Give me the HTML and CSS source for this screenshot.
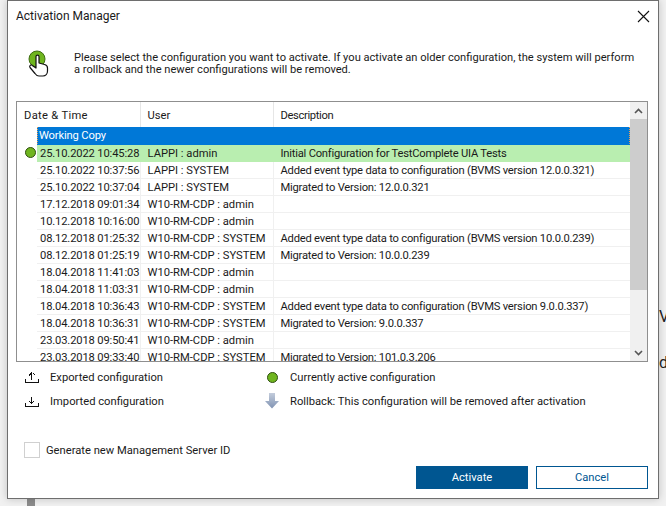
FILE: index.html
```html
<!DOCTYPE html>
<html lang="en">
<head>
  <meta charset="UTF-8" />
  <title>Activation Manager</title>
  <link rel="stylesheet" href="styles.css">
</head>
<body>
  <div class="desktop">
    <div class="behind-bar"></div>
    <span class="behind-text behind-v">V</span>
    <span class="behind-text behind-d">de</span>

    <div class="dialog">
      <div class="titlebar">
        <span class="title">Activation Manager</span>
        <svg class="close" width="13" height="13" viewBox="0 0 13 13">
          <path d="M1 1 L12 12 M12 1 L1 12" stroke="#111" stroke-width="1.1" fill="none"/>
        </svg>
      </div>

      <div class="intro">
        <svg class="intro-icon" width="24" height="30" viewBox="0 0 24 30">
          <circle cx="11" cy="11" r="8" fill="#6fb51f" stroke="#3f6d12" stroke-width="1"/>
          <path d="M10 8.5 C10 6.6 13 6.6 13 8.5 L13 15 L18.5 16.5 C20.5 17 21.5 18 21.5 20 L21.5 23 C21.5 26 19.5 28 17 28 L13 28 C11 28 10 27 9 25.5 L4 19.5 C3 18 4.8 16.2 6.3 17.4 L10 20 Z" fill="#fff" stroke="#111" stroke-width="1.2" stroke-linejoin="round"/>
        </svg>
        <p class="intro-text">Please select the configuration you want to activate. If you activate an older configuration, the system will perform<br>a rollback and the newer configurations will be removed.</p>
      </div>

      <div class="grid">
        <div class="grid-body">
          <table class="versions">
            <colgroup>
              <col class="col-mark"><col class="col-date"><col class="col-user"><col class="col-desc">
            </colgroup>
            <thead>
              <tr>
                <th colspan="2" class="head-date">Date &amp; Time</th>
                <th>User</th>
                <th>Description</th>
              </tr>
            </thead>
            <tbody>
              <tr class="selected"><td class="mark"></td><td class="focus-left">Working Copy</td><td></td><td class="focus-right"></td></tr>
              <tr class="active"><td class="mark"><span class="dot"></span></td><td>25.10.2022 10:45:28</td><td>LAPPI : admin</td><td>Initial Configuration for TestComplete UIA Tests</td></tr>
              <tr><td class="mark"></td><td>25.10.2022 10:37:56</td><td>LAPPI : SYSTEM</td><td>Added event type data to configuration (BVMS version 12.0.0.321)</td></tr>
              <tr><td class="mark"></td><td>25.10.2022 10:37:04</td><td>LAPPI : SYSTEM</td><td>Migrated to Version: 12.0.0.321</td></tr>
              <tr><td class="mark"></td><td>17.12.2018 09:01:34</td><td>W10-RM-CDP : admin</td><td></td></tr>
              <tr><td class="mark"></td><td>10.12.2018 10:16:00</td><td>W10-RM-CDP : admin</td><td></td></tr>
              <tr><td class="mark"></td><td>08.12.2018 01:25:32</td><td>W10-RM-CDP : SYSTEM</td><td>Added event type data to configuration (BVMS version 10.0.0.239)</td></tr>
              <tr><td class="mark"></td><td>08.12.2018 01:25:19</td><td>W10-RM-CDP : SYSTEM</td><td>Migrated to Version: 10.0.0.239</td></tr>
              <tr><td class="mark"></td><td>18.04.2018 11:41:03</td><td>W10-RM-CDP : admin</td><td></td></tr>
              <tr><td class="mark"></td><td>18.04.2018 11:03:31</td><td>W10-RM-CDP : admin</td><td></td></tr>
              <tr><td class="mark"></td><td>18.04.2018 10:36:43</td><td>W10-RM-CDP : SYSTEM</td><td>Added event type data to configuration (BVMS version 9.0.0.337)</td></tr>
              <tr><td class="mark"></td><td>18.04.2018 10:36:31</td><td>W10-RM-CDP : SYSTEM</td><td>Migrated to Version: 9.0.0.337</td></tr>
              <tr><td class="mark"></td><td>23.03.2018 09:50:41</td><td>W10-RM-CDP : admin</td><td></td></tr>
              <tr><td class="mark"></td><td>23.03.2018 09:33:40</td><td>W10-RM-CDP : SYSTEM</td><td>Migrated to Version: 101.0.3.206</td></tr>
            </tbody>
          </table>
        </div>
        <div class="scrollbar">
          <div class="scroll-btn">
            <svg width="9" height="6" viewBox="0 0 9 6"><path d="M1 5 L4.5 1.5 L8 5" stroke="#555" stroke-width="1.6" fill="none"/></svg>
          </div>
          <div class="scroll-track"><div class="scroll-thumb"></div></div>
          <div class="scroll-btn">
            <svg width="9" height="6" viewBox="0 0 9 6"><path d="M1 1 L4.5 4.5 L8 1" stroke="#555" stroke-width="1.6" fill="none"/></svg>
          </div>
        </div>
      </div>

      <div class="legend">
        <div class="legend-item">
          <span class="legend-icon">
            <svg width="14" height="12" viewBox="0 0 14 12" shape-rendering="crispEdges"><path d="M0.5 8 V11.5 H13.5 V8 M6.5 9 V1 M4.5 3.5 H5.5 M3.5 4.5 H4.5 M7.5 2.5 H8.5 M8.5 3.5 H9.5 M5 2.5 H6 M4 3.5 H5" stroke="#111" stroke-width="1" fill="none"/></svg>
          </span>
          Exported configuration
        </div>
        <div class="legend-item">
          <span class="legend-icon"><span class="dot"></span></span>
          Currently active configuration
        </div>
        <div class="legend-item">
          <span class="legend-icon">
            <svg width="14" height="12" viewBox="0 0 14 12" shape-rendering="crispEdges"><path d="M0.5 8 V11.5 H13.5 V8 M6.5 2 V9 M4 6.5 H5 M5 7.5 H6 M7 7.5 H8 M8 6.5 H9" stroke="#111" stroke-width="1" fill="none"/></svg>
          </span>
          Imported configuration
        </div>
        <div class="legend-item">
          <span class="legend-icon">
            <svg width="14" height="16" viewBox="0 0 14 16">
              <defs>
                <linearGradient id="rollback" x1="0" y1="0" x2="0" y2="1">
                  <stop offset="0" stop-color="#c3ccdb"/>
                  <stop offset="1" stop-color="#8093b3"/>
                </linearGradient>
              </defs>
              <path d="M4 0 H10 V8 H14 L7 15.5 L0 8 H4 Z" fill="url(#rollback)"/>
            </svg>
          </span>
          Rollback: This configuration will be removed after activation
        </div>
      </div>

      <label class="generate">
        <span class="checkbox"></span>
        Generate new Management Server ID
      </label>

      <div class="buttons">
        <button type="button" class="btn btn-primary">Activate</button>
        <button type="button" class="btn">Cancel</button>
      </div>
    </div>
  </div>
</body>
</html>
```

FILE: styles.css
```css
* {
  box-sizing: border-box;
}

html, body {
  margin: 0;
  padding: 0;
}

body {
  font-family: Roboto, "Liberation Sans", sans-serif;
  font-size: 11.2px;
  color: #1a1a1a;
}

.desktop {
  position: relative;
  width: 666px;
  height: 506px;
  overflow: hidden;
  background: #f1f1f1;
}

.behind-bar {
  position: absolute;
  left: 27px;
  top: 498px;
  width: 8px;
  height: 8px;
  background: #8c8c8c;
}

.behind-text {
  position: absolute;
  left: 659px;
  font-size: 16px;
  color: #222;
}

.behind-v {
  top: 307px;
}

.behind-d {
  top: 353px;
}

.dialog {
  position: absolute;
  left: 7px;
  top: 0;
  width: 652px;
  height: 499px;
  background: #fff;
  border: 1px solid #6e6e6e;
  box-shadow: 0 0 8px rgba(0,0,0,0.2);
  display: flex;
  flex-direction: column;
}

.titlebar {
  display: flex;
  justify-content: space-between;
  align-items: center;
  height: 30px;
  padding: 0 8px 0 8px;
}

.title {
  font-size: 12px;
}

.close {
  display: block;
}

.intro {
  display: flex;
  align-items: flex-start;
  height: 70px;
  padding: 17px 0 0 18px;
}

.intro-icon {
  flex: none;
  margin-right: 24px;
}

.intro-text {
  margin: 4px 0 0;
  font-size: 11.12px;
  line-height: 12px;
  white-space: nowrap;
}

.grid {
  display: flex;
  height: 261px;
  margin: 0 10px 0 8px;
  border: 1px solid #8f8f8f;
}

.grid-body {
  flex: 1;
  overflow: hidden;
}

.versions {
  width: 613px;
  table-layout: fixed;
  border-collapse: collapse;
}

.col-mark { width: 20px; }
.col-date { width: 103px; }
.col-user { width: 133px; }
.col-desc { width: 357px; }

.versions th {
  height: 25px;
  padding: 2px 0 0 7px;
  text-align: left;
  font-weight: normal;
  border-right: 1px solid #e6e6e6;
}

.versions th.head-date {
  padding-left: 7px;
  letter-spacing: 0.3px;
}

.versions th:last-child {
  letter-spacing: -0.35px;
}

.versions td {
  height: 17px;
  padding: 1px 0 0 7px;
  line-height: 15px;
  white-space: nowrap;
  overflow: hidden;
  border-right: 1px solid #f0f0f0;
  border-bottom: 1px solid #f0f0f0;
}

.versions td:nth-child(2) {
  padding-left: 3px;
  letter-spacing: -0.15px;
}

.versions td:last-child {
  letter-spacing: -0.22px;
}

.versions td.mark {
  padding: 0 0 0 8px;
  border-right: none;
  border-bottom: none;
}

.selected td:not(.mark) {
  background: #0078d7;
  color: #fff;
  border-color: #0078d7;
}

.versions .selected td.focus-left {
  padding-left: 2px;
  background: repeating-linear-gradient(#f0a050 0 1px, #0078d7 1px 2px) left / 1px 100% no-repeat, #0078d7;
}

.selected td.focus-right {
  background: repeating-linear-gradient(#f0a050 0 1px, #0078d7 1px 2px) right / 1px 100% no-repeat, #0078d7;
}

.active td:not(.mark) {
  background: #b9eeb0;
  border-color: #b9eeb0;
}

.dot {
  display: block;
  width: 11px;
  height: 11px;
  border-radius: 50%;
  background: #6fb51f;
  border: 1px solid #2f4f10;
}

.scrollbar {
  flex: none;
  width: 17px;
  display: flex;
  flex-direction: column;
  background: #f0f0f0;
}

.scroll-btn {
  flex: none;
  height: 17px;
  display: flex;
  align-items: center;
  justify-content: center;
}

.scroll-track {
  flex: 1;
}

.scroll-thumb {
  height: 171px;
  background: #cdcdcd;
}

.legend {
  display: grid;
  grid-template-columns: 240px 1fr;
  grid-auto-rows: 24px;
  margin-top: 3px;
  padding-left: 17px;
}

.legend-item {
  display: flex;
  align-items: center;
  white-space: nowrap;
}

.legend-icon {
  flex: none;
  width: 14px;
  margin-right: 11px;
  display: flex;
  justify-content: center;
}

.generate {
  display: flex;
  align-items: center;
  margin: 29px 0 0 16px;
}

.checkbox {
  flex: none;
  width: 16px;
  height: 16px;
  margin-right: 6px;
  border: 1px solid #d0d0d0;
}

.buttons {
  display: flex;
  justify-content: flex-end;
  gap: 8px;
  margin: 8px 10px 0 0;
}

.btn {
  width: 112px;
  height: 23px;
  padding: 0;
  font-family: inherit;
  font-size: 11.2px;
  color: #005691;
  background: #fff;
  border: 1px solid #005691;
}

.btn-primary {
  color: #fff;
  background: #005691;
}
```
